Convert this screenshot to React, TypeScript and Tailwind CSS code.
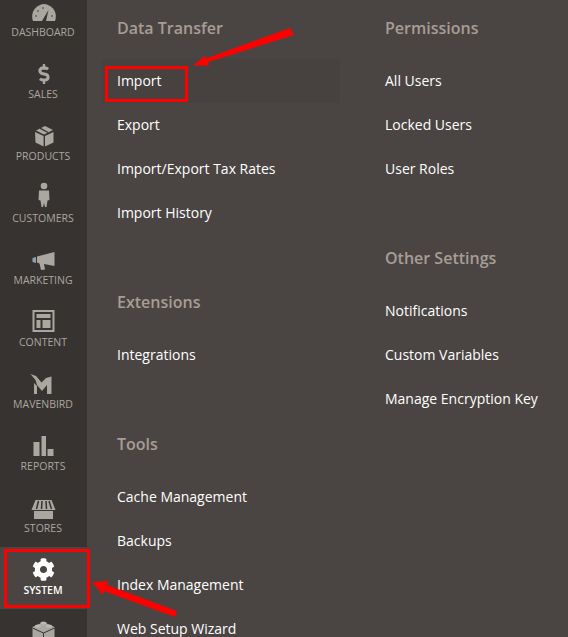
import React from "react";
import { FaCog, FaDollarSign } from "react-icons/fa";

const C = "#aaa6a0";

const Svg = ({ children }: { children: React.ReactNode }) => (
  <svg viewBox="0 0 44 30" width={44} height={30} fill={C}>{children}</svg>
);

const Dashboard = () => (
  <Svg>
    <path d="M11 28 C9.5 24 10 19 13 15.5 C16 12.5 19 11 22 11 C25 11 28 12.5 31 15.5 C34 19 34.5 24 33 28 Z" />
    <path d="M20 28 L26.5 17 L24 28 Z" fill="#373330" />
    <g fill="#373330"><circle cx="14" cy="23" r="0.8" /><circle cx="16" cy="18" r="0.8" /><circle cx="21" cy="15" r="0.8" /><circle cx="30" cy="23" r="0.8" /></g>
  </Svg>
);
const Products = () => (
  <Svg>
    <path d="M13 15 L21.6 19 L21.6 29.5 L13.5 25.5 Z" />
    <path d="M23 19 L31.5 15 L31.5 25.5 L23 29.5 Z" />
    <path d="M14 13.5 L23 9 L31 13 L22 17.5 Z" />
    <path d="M18 11.2 L26 15.5" stroke="#373330" strokeWidth="1.4" fill="none" />
  </Svg>
);
const Customers = () => (
  <Svg>
    <circle cx="22" cy="7" r="3.3" />
    <path d="M17 11.5 H27 L27.5 21 L25.5 21.5 L24.5 28 H23 L22 24 L21 28 H19.5 L18.5 21.5 L16.5 21 Z" />
  </Svg>
);
const Marketing = () => (
  <Svg>
    <path d="M10.5 17 L14 16 V22 L10.5 21 Z" fill="#8fa3ad" />
    <path d="M15 15.5 L32.5 11 V25 L22 23 L23 28.5 L19 29 L17.5 22.5 L15 21.5 Z" />
  </Svg>
);
const Content = () => (
  <Svg>
    <path fillRule="evenodd" d="M10.5 7 H32.5 V29 H10.5 Z M12.5 9 V27 H30.5 V9 Z" />
    <path d="M14.5 11 H28.5 V15 H14.5 Z M14.5 17 H18.5 V25 H14.5 Z M20.5 17 H28.5 V25 H20.5 Z" />
  </Svg>
);
const Mavenbird = () => (
  <Svg>
    <path d="M8.5 9 L14 11 L19.5 17.5 L24 13 L29.5 11.5 V29 H25 V20 L20 26 L15 20 L13.5 15 Z" />
    <path d="M12 18 L15 21 V29 H12 Z" />
  </Svg>
);
const Reports = () => (
  <Svg>
    <path d="M11.5 15 H17.5 V29 H11.5 Z M19.5 9 H24 V29 H19.5 Z M25.5 22 H31.5 V29 H25.5 Z" />
  </Svg>
);
const Stores = () => (
  <Svg>
    <path d="M13.5 11 H29.5 L33.5 21 H9.5 Z" />
    <path d="M16.5 12 L14.5 20 M20 12 L19.5 20 M24 12 L24.5 20 M27 12 L29.5 20" stroke="#373330" strokeWidth="1.5" />
    <path d="M12 22 H31 V30 H12 Z" />
  </Svg>
);
const Lego = () => (
  <Svg>
    <path d="M10.5 14 L21.5 9 L32.5 14 V26 L21.5 31 L10.5 26 Z" />
    <path d="M10.5 15 L21.5 20 L32.5 15 M21.5 20 V31" stroke="#373330" strokeWidth="1" fill="none" />
    <ellipse cx="21.5" cy="10" rx="3" ry="1.5" fill="#bdb9b3" />
    <ellipse cx="16" cy="13" rx="3" ry="1.5" fill="#bdb9b3" />
    <ellipse cx="27" cy="13" rx="3" ry="1.5" fill="#bdb9b3" />
  </Svg>
);

const nav: { label: string; icon: React.ReactNode; active?: boolean }[] = [
  { label: "Dashboard", icon: <Dashboard /> },
  { label: "Sales", icon: <div className="flex h-[30px] w-11 items-end justify-center pb-px text-[#aaa6a0]"><FaDollarSign size={20} /></div> },
  { label: "Products", icon: <Products /> },
  { label: "Customers", icon: <Customers /> },
  { label: "Marketing", icon: <Marketing /> },
  { label: "Content", icon: <Content /> },
  { label: "Mavenbird", icon: <Mavenbird /> },
  { label: "Reports", icon: <Reports /> },
  { label: "Stores", icon: <Stores /> },
  { label: "System", active: true, icon: <div className="flex h-[30px] w-11 items-end justify-center text-white"><FaCog size={23} /></div> },
  { label: "", icon: <Lego /> },
];

const Section = ({ title, links, first }: { title: string; links: string[]; first?: boolean }) => (
  <section className={first ? "pt-[17px]" : "pt-[56px]"}>
    <h3 className="mb-[20px] h-[22px] text-base leading-[22px] font-semibold text-[#a79d95]">{title}</h3>
    <ul>
      {links.map((l) => (
        <li key={l} className={"relative flex h-11 items-center whitespace-nowrap text-sm text-white " + (l === "Import" ? "-mx-[15px] w-[238px] bg-[#47423f] px-[15px]" : "")}>
          {l}
        </li>
      ))}
    </ul>
  </section>
);

export default function App() {
  return (
    <div className="relative flex h-[637px] w-[568px] overflow-hidden bg-[#4a4542] font-['Open_Sans',sans-serif]">
      <nav className="w-[87px] shrink-0 bg-[#373330] -mt-[11px]">
        {nav.map((n, i) => (
          <div key={i} className={"flex h-[62px] flex-col items-center pt-1 " + (n.active ? "bg-[#4a4542]" : "")}>
            {n.icon}
            <span className={"mt-[2px] pr-px text-[10.5px] leading-[14px] uppercase " + (n.active ? "font-semibold text-white" : "text-[#aaa6a0]")}>{n.label}</span>
          </div>
        ))}
      </nav>
      <main className="flex pl-[30px]">
        <div className="w-[268px] shrink-0">
          <Section first title="Data Transfer" links={["Import", "Export", "Import/Export Tax Rates", "Import History"]} />
          <Section title="Extensions" links={["Integrations"]} />
          <Section title="Tools" links={["Cache Management", "Backups", "Index Management", "Web Setup Wizard"]} />
        </div>
        <div className="w-[183px] shrink-0">
          <Section first title="Permissions" links={["All Users", "Locked Users", "User Roles"]} />
          <Section title="Other Settings" links={["Notifications", "Custom Variables", "Manage Encryption Key"]} />
        </div>
      </main>
      <div className="absolute top-[66px] left-[105px] h-[36px] w-[83px] border-[3px] border-[#ff0000]" />
      <div className="absolute top-[549px] left-[4px] h-[59px] w-[86px] border-[3px] border-[#ff0000]" />
      <svg className="absolute inset-0" width={568} height={637} fill="#ff0000">
        <path d="M290 28 L294 35 L208 62 L209 65.5 L193 65.5 L205 56 L206 58.5 Z" />
        <path d="M92 582 L108 581 L107 585 L177 611 L175 617 L104 591 L103 595 Z" />
      </svg>
    </div>
  );
}
